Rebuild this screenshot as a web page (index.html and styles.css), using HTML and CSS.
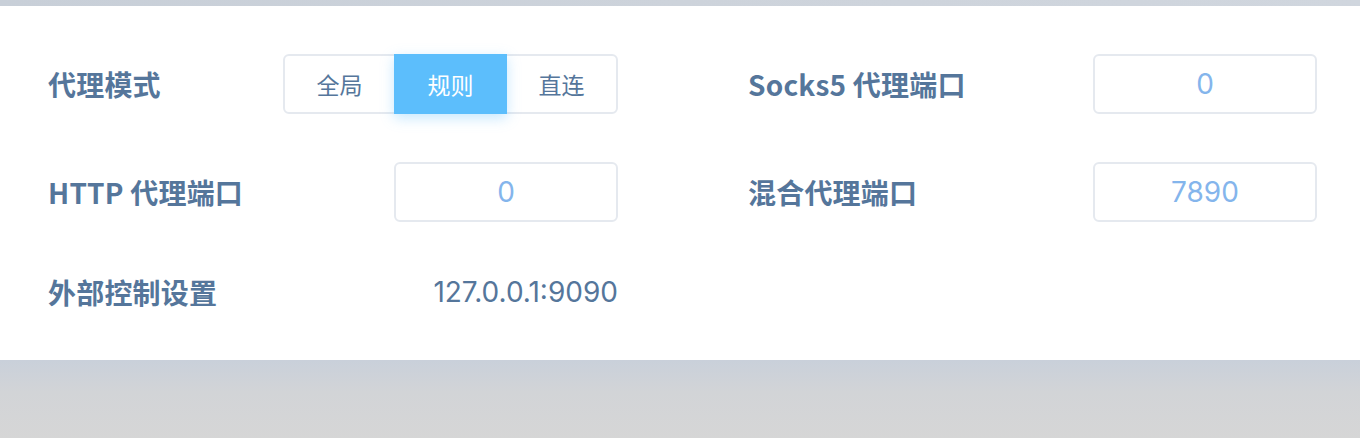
FILE: index.html
```html
<!DOCTYPE html>
<html lang="zh-CN">
<head>
<meta charset="utf-8">
<title>设置</title>
<link rel="stylesheet" href="styles.css">
</head>
<body>
<div class="topstrip"></div>
<section class="card">
  <div class="grid">
    <div class="item">
      <span class="label">代理模式</span>
      <div class="seg">
        <button class="seg-btn">全局</button>
        <button class="seg-btn active">规则</button>
        <button class="seg-btn">直连</button>
      </div>
    </div>
    <div class="item">
      <span class="label">Socks5 代理端口</span>
      <div class="input">0</div>
    </div>
    <div class="item">
      <span class="label">HTTP 代理端口</span>
      <div class="input">0</div>
    </div>
    <div class="item">
      <span class="label">混合代理端口</span>
      <div class="input">7890</div>
    </div>
    <div class="item short">
      <span class="label">外部控制设置</span>
      <span class="value">127.0.0.1:9090</span>
    </div>
  </div>
</section>
<div class="bottom"></div>
</body>
</html>
```
FILE: styles.css
```css
html, body {
  margin: 0;
  padding: 0;
}
body {
  width: 1360px;
  height: 438px;
  overflow: hidden;
  background: #d6d6d6;
  font-family: Inter, "Noto Sans CJK SC", sans-serif;
}
.topstrip {
  height: 6px;
  background: linear-gradient(90deg, #c8cfd8, #cdd3db 50%, #d0d6de);
}
.card {
  background: #ffffff;
  padding: 48px 43px 46px 48px;
}
.grid {
  display: grid;
  grid-template-columns: 570px 569px;
  column-gap: 130px;
  row-gap: 48px;
}
.item {
  display: flex;
  align-items: center;
  justify-content: space-between;
  height: 60px;
}
.item.short {
  height: 44px;
}
.label {
  font-family: "Noto Sans CJK SC", sans-serif;
  font-weight: 700;
  font-size: 28px;
  color: #55769b;
  letter-spacing: 0.2px;
}
.seg {
  display: flex;
  height: 60px;
}
.seg-btn {
  width: 113px;
  height: 60px;
  margin: 0 0 0 -2px;
  padding: 0;
  border: 2px solid #e5e9ef;
  background: #fff;
  font-family: "Noto Sans CJK SC", sans-serif;
  font-size: 23px;
  color: #55769b;
}
.seg-btn:first-child {
  margin-left: 0;
  border-radius: 6px 0 0 6px;
}
.seg-btn:last-child {
  border-radius: 0 6px 6px 0;
}
.seg-btn.active {
  position: relative;
  background: #5cbefc;
  border-color: #5cbefc;
  color: #ffffff;
  box-shadow: 0 4px 12px rgba(92, 190, 252, 0.35);
}
.input {
  box-sizing: border-box;
  width: 224px;
  height: 60px;
  border: 2px solid #e5e9ef;
  border-radius: 6px;
  display: flex;
  align-items: center;
  justify-content: center;
  font-size: 28px;
  color: #84b5ec;
}
.value {
  font-size: 28px;
  color: #55769b;
}
.bottom {
  height: 80px;
  background: linear-gradient(180deg, #c9d0da 0%, #d2d4d7 40%, #d6d6d6 100%);
}
```
